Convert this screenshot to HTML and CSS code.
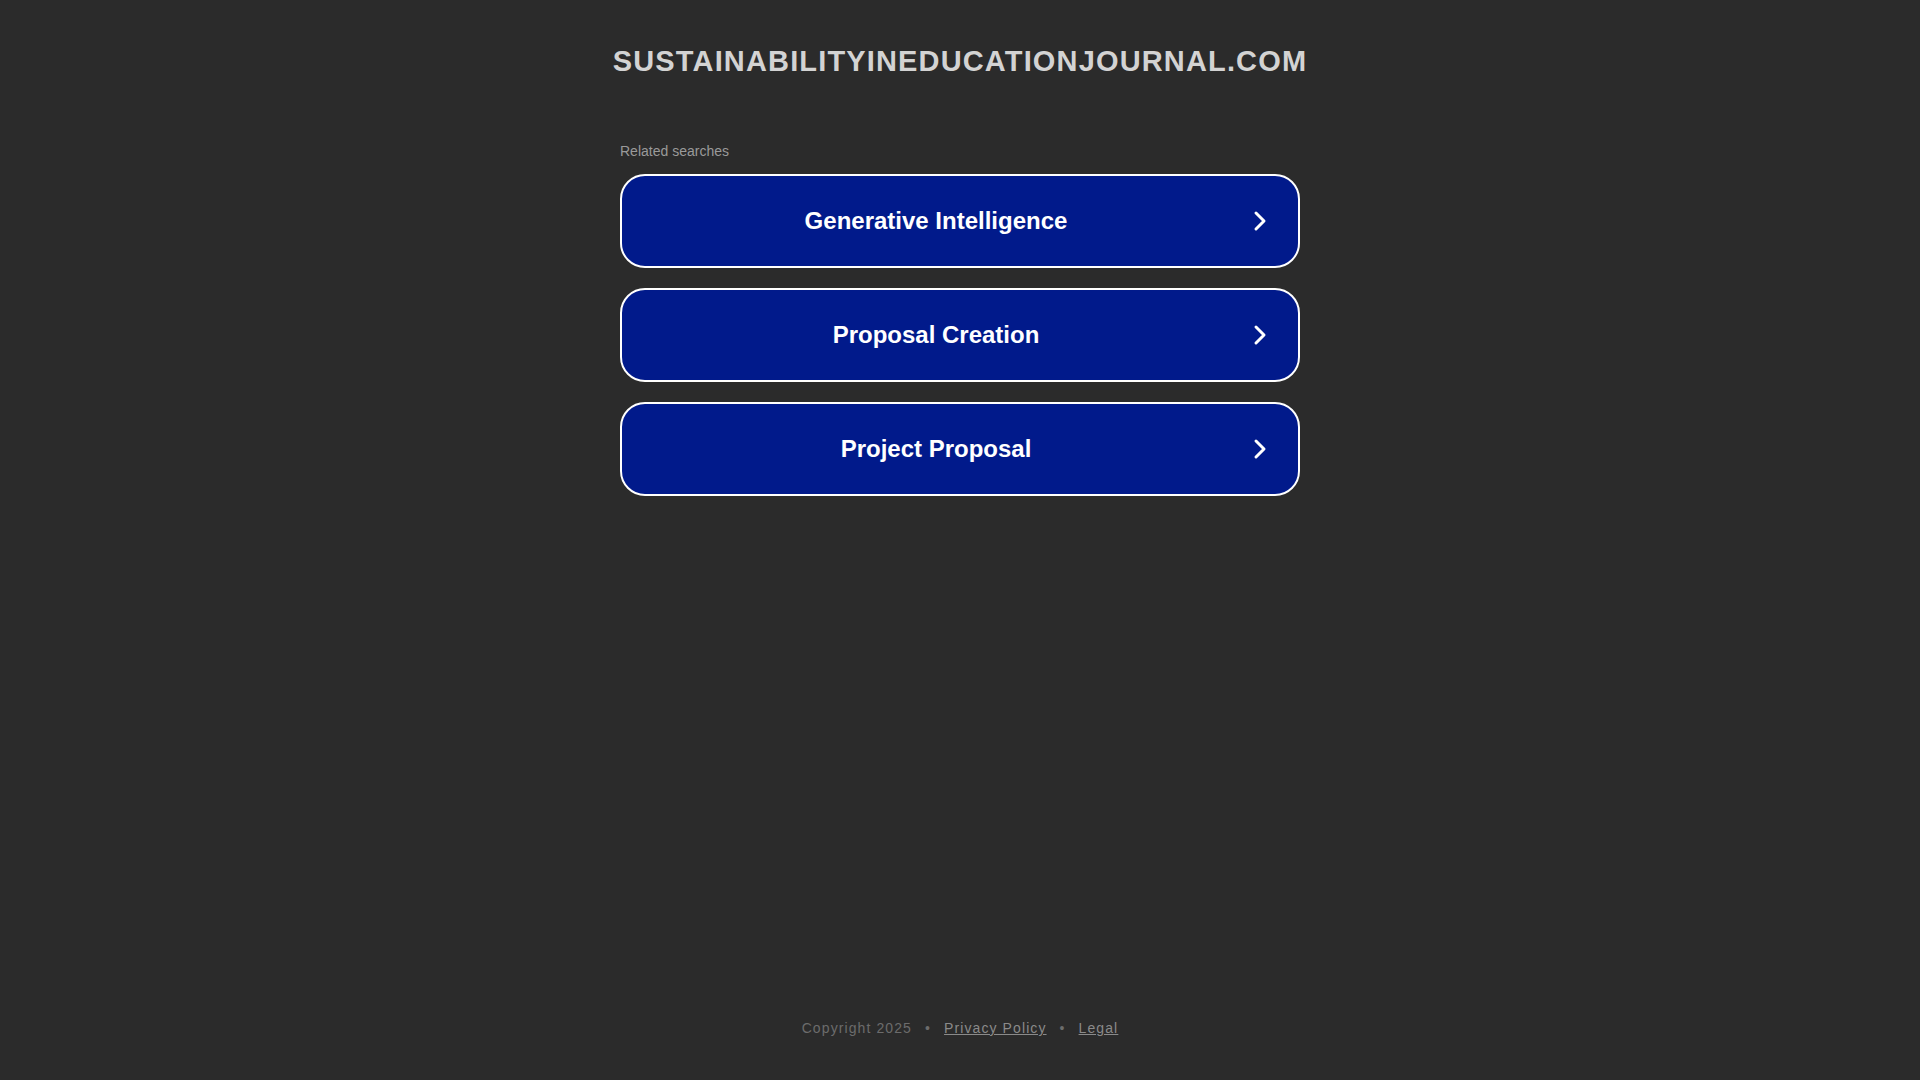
FILE: index.html
```html
<!DOCTYPE html>
<html lang="en">
<head>
<meta charset="utf-8">
<title>sustainabilityineducationjournal.com</title>
<link rel="stylesheet" href="styles.css">
</head>
<body>
<div class="page">
  <header class="header">
    <h1 class="domain">SUSTAINABILITYINEDUCATIONJOURNAL.COM</h1>
  </header>
  <main class="main">
    <div class="related">
      <p class="related-title">Related searches</p>
      <a class="search" href="#"><span class="search-text">Generative Intelligence</span><svg class="chev" viewBox="0 0 16 24" width="16" height="24"><path d="M4 4 L12 12 L4 20" fill="none" stroke="#fff" stroke-width="3" stroke-linecap="round" stroke-linejoin="round"/></svg></a>
      <a class="search" href="#"><span class="search-text">Proposal Creation</span><svg class="chev" viewBox="0 0 16 24" width="16" height="24"><path d="M4 4 L12 12 L4 20" fill="none" stroke="#fff" stroke-width="3" stroke-linecap="round" stroke-linejoin="round"/></svg></a>
      <a class="search" href="#"><span class="search-text">Project Proposal</span><svg class="chev" viewBox="0 0 16 24" width="16" height="24"><path d="M4 4 L12 12 L4 20" fill="none" stroke="#fff" stroke-width="3" stroke-linecap="round" stroke-linejoin="round"/></svg></a>
    </div>
  </main>
  <footer class="footer">
    <span class="copy">Copyright 2025</span>
    <span class="dot">•</span>
    <a class="flink" href="#">Privacy Policy</a>
    <span class="dot">•</span>
    <a class="flink" href="#">Legal</a>
  </footer>
</div>
</body>
</html>
```

FILE: styles.css
```css
html, body {
  margin: 0;
  padding: 0;
  background: #2b2b2b;
  font-family: "Liberation Sans", Arial, sans-serif;
}
.page {
  min-height: 1080px;
  display: flex;
  flex-direction: column;
}
.header {
  padding-top: 43px;
  text-align: center;
}
.domain {
  margin: 0;
  font-size: 29px;
  font-weight: bold;
  letter-spacing: 1.15px;
  color: #d3d3d3;
  line-height: 36px;
}
.main {
  flex: 1;
  display: flex;
  justify-content: center;
  padding-top: 63px;
}
.related {
  width: 680px;
  display: flex;
  flex-direction: column;
}
.related-title {
  margin: 0 0 14px 0;
  font-size: 14px;
  color: #9a9a9a;
  line-height: 18px;
}
.search {
  position: relative;
  display: flex;
  align-items: center;
  justify-content: center;
  height: 90px;
  margin-bottom: 20px;
  background: #011a8b;
  border: 2px solid #ffffff;
  border-radius: 25px;
  text-decoration: none;
  box-sizing: content-box;
}
.search-text {
  color: #ffffff;
  font-size: 24px;
  font-weight: bold;
  margin-right: 48px;
}
.chev {
  position: absolute;
  right: 30px;
  top: 50%;
  margin-top: -12px;
}
.footer {
  text-align: center;
  padding-bottom: 44px;
  font-size: 14px;
  letter-spacing: 1.1px;
  color: #6c6c6c;
}
.dot {
  margin: 0 8px;
}
.flink {
  color: #8a8a8a;
  text-decoration: underline;
}
```
